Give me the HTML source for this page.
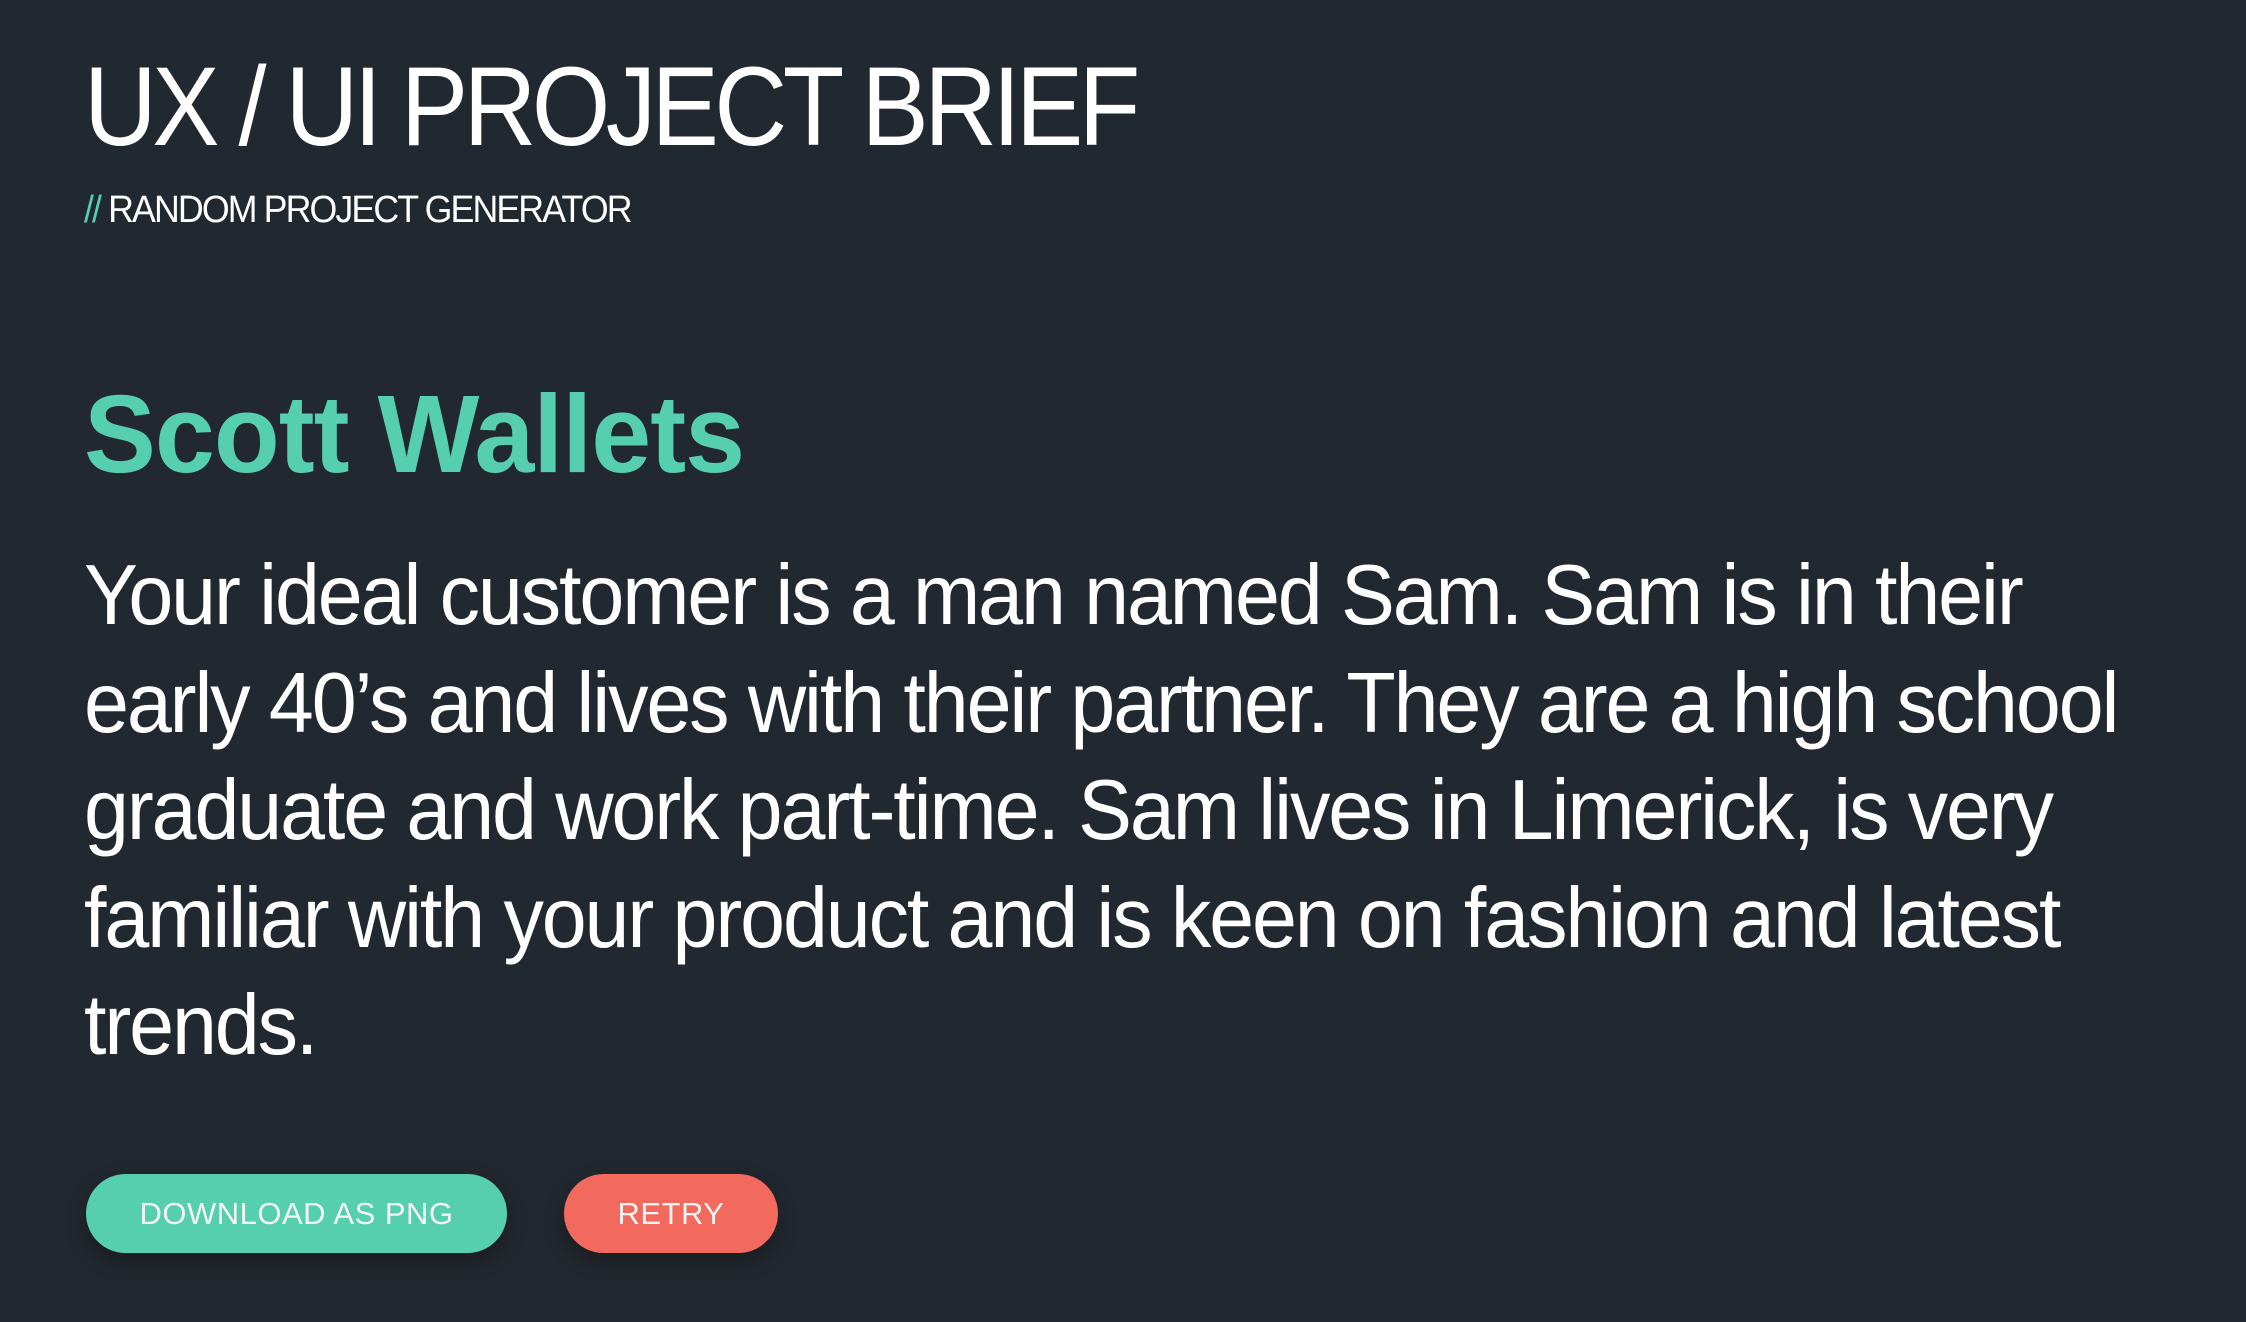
<!DOCTYPE html>
<html><head><meta charset="utf-8"><style>
html,body{margin:0;padding:0;background:#22282f;width:2246px;height:1322px;overflow:hidden;font-family:"Liberation Sans",sans-serif;}
.a{position:absolute;white-space:nowrap;transform-origin:0 0;}
#t{left:84px;top:42px;font-size:112px;color:#fff;line-height:130px;letter-spacing:-5px;transform:scaleX(0.90);}
#s{left:84px;top:188px;font-size:38px;color:#fff;line-height:44px;letter-spacing:-2px;transform:scaleX(0.94);}
#s span{color:#55cfad;}
#h{left:84px;top:370px;font-size:110px;color:#55cfad;font-weight:bold;line-height:130px;letter-spacing:-1px;transform:scaleX(0.98);}
#p{left:84px;top:542px;font-size:85px;color:#fff;line-height:107.5px;letter-spacing:-2.2px;transform:scaleX(0.95);}
.b{position:absolute;top:1174px;height:79px;border-radius:40px;color:#f4f4f4;font-size:31px;line-height:79px;text-align:center;letter-spacing:0.5px;box-shadow:0 8px 20px rgba(0,0,0,.3);}
</style></head><body>
<div class="a" id="t">UX / UI PROJECT BRIEF</div>
<div class="a" id="s"><span>//</span> RANDOM PROJECT GENERATOR</div>
<div class="a" id="h">Scott Wallets</div>
<div class="a" id="p">Your ideal customer is a man named Sam. Sam is in their<br>early 40’s and lives with their partner. They are a high school<br>graduate and work part-time. Sam lives in Limerick, is very<br>familiar with your product and is keen on fashion and latest<br>trends.</div>
<div class="b" style="left:86px;width:421px;background:#55cfad;">DOWNLOAD AS PNG</div>
<div class="b" style="left:564px;width:214px;background:#f2695d;">RETRY</div>
</body></html>
